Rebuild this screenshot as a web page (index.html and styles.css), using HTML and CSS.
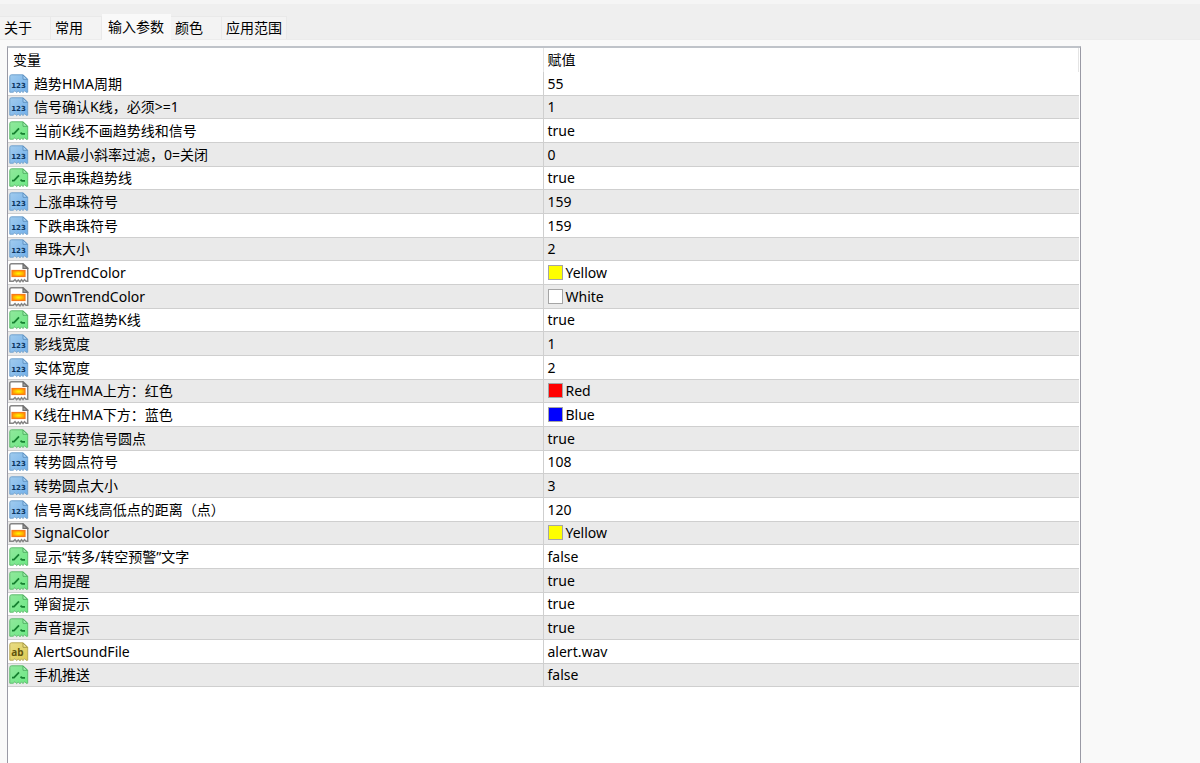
FILE: index.html
```html
<!DOCTYPE html>
<html lang="zh-CN">

<head>
    <meta charset="UTF-8">
    <meta name="viewport" content="width=device-width, initial-scale=1.0">
    <title>输入参数</title>
    <link rel="stylesheet" href="styles.css">
</head>

<body>

    <!-- icon set for the parameter types -->
    <svg class="icon-defs" aria-hidden="true">
        <defs>
            <linearGradient id="blueFill" x1="0" y1="0" x2="1" y2="1">
                <stop offset="0" stop-color="#a0cbee" />
                <stop offset="1" stop-color="#72b0ea" />
            </linearGradient>
            <linearGradient id="greenFill" x1="0" y1="0" x2="1" y2="1">
                <stop offset="0" stop-color="#90e89c" />
                <stop offset="1" stop-color="#6ce884" />
            </linearGradient>
            <linearGradient id="goldFill" x1="0" y1="0" x2="1" y2="1">
                <stop offset="0" stop-color="#e9dc86" />
                <stop offset="1" stop-color="#dccb52" />
            </linearGradient>
            <radialGradient id="sunFill">
                <stop offset="0.1" stop-color="#ffee00" />
                <stop offset="1" stop-color="#ff9500" />
            </radialGradient>
            <path id="sheet" d="M2.5 .8H14L18.7 5.2V18.2H17L15.5 16.6 14 18.6 12.5 16.8 11 18.8 9.3 17 7.6 18.6 6 16.6 4.2 18.2H.8V2.5Q.8 .8 2.5 .8Z" />
            <symbol id="icon-int" viewBox="0 0 20 20">
                <use href="#sheet" fill="url(#blueFill)" stroke="#74a3cd" />
                <path d="M14 1V5.3H18.5Z" fill="#a9d2f5" stroke="#5b8fbf" stroke-width=".9" />
                <text class="icon-digits" x="9.5" y="13.5">123</text>
            </symbol>
            <symbol id="icon-bool" viewBox="0 0 20 20">
                <use href="#sheet" fill="url(#greenFill)" stroke="#62bd70" />
                <path d="M14 1V5.3H18.5Z" fill="#a5f2b2" stroke="#4caa5d" stroke-width=".9" />
                <path d="M3 12.6H5L10 7.4M11.5 11.8L13 12.8H16" fill="none" stroke="#168030" stroke-width="1.8" />
            </symbol>
            <symbol id="icon-color" viewBox="0 0 20 20">
                <use href="#sheet" fill="#fff" stroke="#858585" stroke-width="1.5" />
                <path d="M14 1V5.3H18.5Z" fill="#aaa" stroke="#707070" stroke-width="1.2" />
                <rect x="3" y="7.5" width="13" height="6" fill="url(#sunFill)" stroke="#f87a18" stroke-width="1.2" />
            </symbol>
            <symbol id="icon-string" viewBox="0 0 20 20">
                <use href="#sheet" fill="url(#goldFill)" stroke="#b9aa58" />
                <path d="M14 1V5.3H18.5Z" fill="#f1e693" stroke="#a3943f" stroke-width=".9" />
                <text class="icon-letters" x="8.5" y="14">ab</text>
            </symbol>
        </defs>
    </svg>

    <nav class="tabs">
        <button type="button" class="tab">关于</button>
        <button type="button" class="tab">常用</button>
        <button type="button" class="tab active">输入参数</button>
        <button type="button" class="tab">颜色</button>
        <button type="button" class="tab">应用范围</button>
    </nav>

    <main class="panel">
        <table class="params">
            <tr><th scope="col">变量</th><th scope="col">赋值</th></tr>
            <tr><td><svg class="icon"><use href="#icon-int" /></svg>趋势HMA周期</td><td>55</td></tr>
            <tr><td><svg class="icon"><use href="#icon-int" /></svg>信号确认K线，必须&gt;=1</td><td>1</td></tr>
            <tr><td><svg class="icon"><use href="#icon-bool" /></svg>当前K线不画趋势线和信号</td><td>true</td></tr>
            <tr><td><svg class="icon"><use href="#icon-int" /></svg>HMA最小斜率过滤，0=关闭</td><td>0</td></tr>
            <tr><td><svg class="icon"><use href="#icon-bool" /></svg>显示串珠趋势线</td><td>true</td></tr>
            <tr><td><svg class="icon"><use href="#icon-int" /></svg>上涨串珠符号</td><td>159</td></tr>
            <tr><td><svg class="icon"><use href="#icon-int" /></svg>下跌串珠符号</td><td>159</td></tr>
            <tr><td><svg class="icon"><use href="#icon-int" /></svg>串珠大小</td><td>2</td></tr>
            <tr><td><svg class="icon"><use href="#icon-color" /></svg>UpTrendColor</td><td><span class="swatch yellow"></span>Yellow</td></tr>
            <tr><td><svg class="icon"><use href="#icon-color" /></svg>DownTrendColor</td><td><span class="swatch white"></span>White</td></tr>
            <tr><td><svg class="icon"><use href="#icon-bool" /></svg>显示红蓝趋势K线</td><td>true</td></tr>
            <tr><td><svg class="icon"><use href="#icon-int" /></svg>影线宽度</td><td>1</td></tr>
            <tr><td><svg class="icon"><use href="#icon-int" /></svg>实体宽度</td><td>2</td></tr>
            <tr><td><svg class="icon"><use href="#icon-color" /></svg>K线在HMA上方：红色</td><td><span class="swatch red"></span>Red</td></tr>
            <tr><td><svg class="icon"><use href="#icon-color" /></svg>K线在HMA下方：蓝色</td><td><span class="swatch blue"></span>Blue</td></tr>
            <tr><td><svg class="icon"><use href="#icon-bool" /></svg>显示转势信号圆点</td><td>true</td></tr>
            <tr><td><svg class="icon"><use href="#icon-int" /></svg>转势圆点符号</td><td>108</td></tr>
            <tr><td><svg class="icon"><use href="#icon-int" /></svg>转势圆点大小</td><td>3</td></tr>
            <tr><td><svg class="icon"><use href="#icon-int" /></svg>信号离K线高低点的距离（点）</td><td>120</td></tr>
            <tr><td><svg class="icon"><use href="#icon-color" /></svg>SignalColor</td><td><span class="swatch yellow"></span>Yellow</td></tr>
            <tr><td><svg class="icon"><use href="#icon-bool" /></svg>显示“转多/转空预警”文字</td><td>false</td></tr>
            <tr><td><svg class="icon"><use href="#icon-bool" /></svg>启用提醒</td><td>true</td></tr>
            <tr><td><svg class="icon"><use href="#icon-bool" /></svg>弹窗提示</td><td>true</td></tr>
            <tr><td><svg class="icon"><use href="#icon-bool" /></svg>声音提示</td><td>true</td></tr>
            <tr><td><svg class="icon"><use href="#icon-string" /></svg>AlertSoundFile</td><td>alert.wav</td></tr>
            <tr><td><svg class="icon"><use href="#icon-bool" /></svg>手机推送</td><td>false</td></tr>
        </table>
    </main>

</body>

</html>
```

FILE: styles.css
```css
* {
    box-sizing: border-box;
}

body {
    margin: 0;
    min-height: 100vh;
    display: flex;
    flex-direction: column;
    background: #f9f9f9;
    color: #000;
    font-family: "Noto Sans", "Noto Sans CJK SC", sans-serif;
    font-size: 14px;
    line-height: 20px;
}

.icon-defs {
    position: absolute;
    width: 0;
    height: 0;
}

.tabs {
    display: flex;
    align-items: flex-end;
    height: 40px;
    background: #efefef;
    border-top: 4px solid #f5f5f5;
    border-bottom: 1px solid #ececec;
}

.tab {
    min-width: 51px;
    height: 23px;
    padding: 0 4px;
    border: 1px solid #e9e9e9;
    border-width: 1px 1px 0 0;
    background: #f3f3f3;
    color: inherit;
    font: inherit;
    text-align: left;
}

.tab.active {
    height: 26px;
    padding: 0 6px 2px;
    margin-bottom: -1px;
    border-color: #f9f9f9;
    background: #f9f9f9;
}

.panel {
    flex: 1;
    margin: 6px 119px 0 7px;
    background: #fff;
    border: 1px solid #9a9aa5;
    border-top: 2px solid #bfc3c9;
    border-bottom: 0;
}

.params {
    width: 100%;
    table-layout: fixed;
    border-collapse: separate;
    border-spacing: 0;
    border: 0 solid #fff;
    border-right-width: 1px;
}

.params tr {
    height: 24px;
}

.params tr:nth-child(3n) {
    height: 23px;
}

.params tr:nth-child(odd) td {
    background: #eaeaea;
}

.params th,
.params td {
    padding: 0 0 0 4px;
    text-align: left;
    white-space: nowrap;
    font-weight: normal;
}

.params td {
    border-bottom: 1px solid #cfcfcf;
}

.params td:first-child {
    padding-left: 1px;
    border-right: 1px solid #cfcfcf;
}

.params th {
    border-right: 1px solid #e4e4e4;
}

.params th:first-child {
    padding-left: 5px;
}

.icon {
    width: 20px;
    height: 20px;
    margin-right: 5px;
    vertical-align: top;
}

.icon-digits {
    font: bold 7px "DejaVu Sans", sans-serif;
    text-anchor: middle;
    fill: #0c3560;
}

.icon-letters {
    font: bold 10px "Noto Sans", sans-serif;
    text-anchor: middle;
    fill: #62540c;
}

.swatch {
    display: inline-block;
    width: 15px;
    height: 15px;
    margin: 2px 3px 0 0;
    border: 1px solid #a5a5a5;
    vertical-align: top;
}

.yellow {
    background: #ffff00;
}

.white {
    background: #ffffff;
}

.red {
    background: #ff0000;
}

.blue {
    background: #0000ff;
}
```
